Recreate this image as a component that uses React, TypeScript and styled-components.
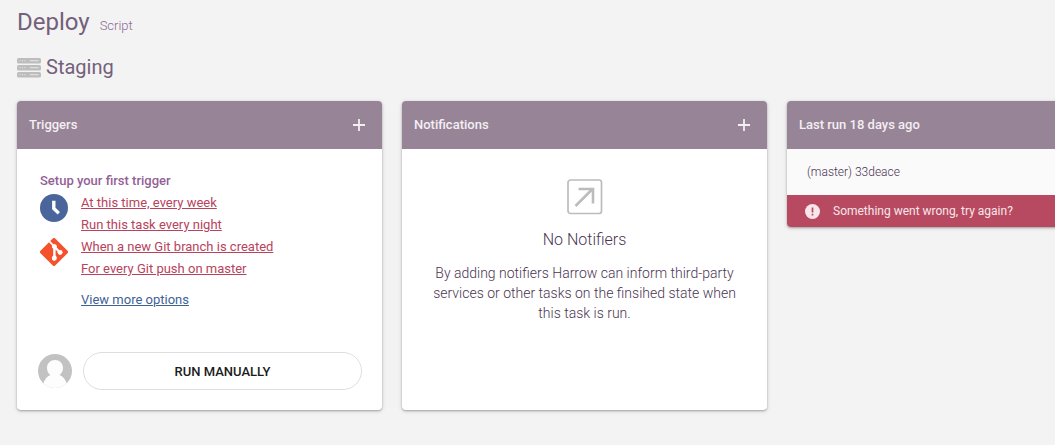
import React from "react";
import styled, { createGlobalStyle } from "styled-components";

const GlobalStyle = createGlobalStyle`
  *, *::before, *::after { box-sizing: border-box; }
  body {
    margin: 0;
    background: #f3f3f3;
    color: #4b3552;
    font-family: Roboto, "Liberation Sans", sans-serif;
    font-size: 13px;
    line-height: 22px;
  }
  h1, h2, h3, p, ul { margin: 0; padding: 0; }
  svg { display: block; flex: none; }
`;

const Page = styled.main`
  padding: 6px 0 32px 17px;
  overflow-x: hidden;
`;

const PageHeader = styled.header`
  display: flex;
  align-items: baseline;
  gap: 10px;
`;

const Title = styled.h1`
  font-size: 24px;
  font-weight: 400;
  line-height: 32px;
  color: #73607a;
`;

const Kind = styled.span`
  font-weight: 300;
  color: #8a6a93;
`;

const Environment = styled.h2`
  display: flex;
  align-items: center;
  gap: 5px;
  margin-top: 13px;
  font-size: 20px;
  font-weight: 400;
  line-height: 32px;
  color: #73607a;
`;

const Board = styled.div`
  display: grid;
  grid-auto-flow: column;
  grid-auto-columns: minmax(365px, 1fr);
  align-items: start;
  gap: 20px;
  margin-top: 18px;
`;

const Card = styled.section<{ $tall?: boolean }>`
  display: flex;
  flex-direction: column;
  min-height: ${(p) => (p.$tall ? "309px" : "0")};
  border-radius: 4px;
  overflow: hidden;
  background: #fff;
  box-shadow: 0 1px 5px rgba(0, 0, 0, 0.14), 0 1px 2px rgba(0, 0, 0, 0.26);
`;

const CardHeader = styled.header`
  display: flex;
  align-items: center;
  justify-content: space-between;
  height: 48px;
  padding: 0 12px;
  background: #988497;
  color: #f3eff3;
`;

const CardTitle = styled.h3`
  font-size: 13px;
  font-weight: 500;
`;

const AddButton = styled.button`
  display: flex;
  align-items: center;
  justify-content: center;
  width: 22px;
  height: 22px;
  padding: 0;
  border: 0;
  background: none;
  color: inherit;
  cursor: pointer;
`;

const Setup = styled.div`
  padding: 21px 23px 0;
`;

const SetupTitle = styled.h3`
  font-size: 13px;
  font-weight: 500;
  color: #935f97;
`;

const TriggerGroup = styled.div`
  display: flex;
  align-items: flex-start;
  gap: 13px;
`;

const TriggerIcon = styled.span`
  padding-top: 2px;
`;

const TriggerList = styled.ul`
  list-style: none;
`;

const TextLink = styled.a<{ $tone: string }>`
  color: ${(p) => p.$tone};
  text-decoration: underline;
`;

const MoreOptions = styled.p`
  margin: 9px 0 0 41px;
`;

const RunBar = styled.div`
  display: flex;
  align-items: center;
  gap: 11px;
  margin-top: auto;
  padding: 20px 20px 20px 21px;
`;

const RunButton = styled.button`
  flex: 1;
  height: 38px;
  border: 1px solid #dedede;
  border-radius: 19px;
  background: #fff;
  color: #1c1c1c;
  font: 500 13px Roboto, "Liberation Sans", sans-serif;
  text-transform: uppercase;
  cursor: pointer;
`;

const EmptyState = styled.div`
  display: flex;
  flex-direction: column;
  align-items: center;
  padding: 30px 24px;
  text-align: center;
`;

const EmptyTitle = styled.h3`
  margin-top: 14px;
  font-size: 16px;
  font-weight: 300;
  line-height: 22px;
`;

const EmptyText = styled.p`
  margin-top: 12px;
  font-size: 14px;
  font-weight: 300;
  line-height: 20px;
`;

const Revision = styled.p`
  padding: 12px 20px;
  background: #fafafa;
  font-size: 12px;
  font-weight: 300;
`;

const RunError = styled.button`
  display: flex;
  align-items: center;
  gap: 13px;
  height: 32px;
  padding: 0 18px;
  border: 0;
  background: #b74a60;
  color: #f8e6ea;
  font: 400 12px Roboto, "Liberation Sans", sans-serif;
  text-align: left;
  cursor: pointer;
`;

const RED = "#b8435c";
const BLUE = "#3e6294";

const ServerIcon = () => (
  <svg width="24" height="22" viewBox="0 0 24 22" aria-hidden="true">
    {[2, 9, 16].map((y) => (
      <g key={y}>
        <rect y={y} width="24" height="5.500" rx="1.500" fill="#bdbdbd" />
        <path
          d={`M2.500 ${y + 2.7}h1M5 ${y + 2.7}h1M7.500 ${y + 2.7}h1M13 ${y + 2.7}h8.500`}
          stroke="#dedede"
          strokeWidth="1.200"
        />
      </g>
    ))}
  </svg>
);

const PlusIcon = () => (
  <svg width="12" height="12" viewBox="0 0 12 12" aria-hidden="true">
    <path d="M6 0v12M0 6h12" stroke="currentColor" strokeWidth="1.800" />
  </svg>
);

const ClockIcon = () => (
  <svg width="28" height="28" viewBox="0 0 28 28" aria-hidden="true">
    <circle cx="14" cy="14" r="14" fill="#4a649c" />
    <path d="M13.800 6.800v7.800l5 4.600" fill="none" stroke="#fff" strokeWidth="3.400" />
  </svg>
);

const GitIcon = () => (
  <svg width="28" height="28" viewBox="0 0 28 28" aria-hidden="true">
    <path
      d="M12.800.500 10.200 3.100l3.300 3.300a2.200 2.200 0 0 1 2.800 2.800l3.200 3.200a2.200 2.200 0 1 1-1.300 1.300l-3-3v7.800a2.200 2.200 0 1 1-1.800-.100v-7.900a2.200 2.200 0 0 1-1.200-2.900L9 4.300.500 12.800a1.700 1.700 0 0 0 0 2.400l12.300 12.300a1.700 1.700 0 0 0 2.400 0l12.300-12.300a1.700 1.700 0 0 0 0-2.400L15.200.500a1.700 1.700 0 0 0-2.400 0Z"
      fill="#f4512c"
    />
    <path d="M14.500 10v9M15 9.500l4.500 4.500" stroke="#fff" strokeWidth="2" />
    <circle cx="14.400" cy="8.600" r="2.400" fill="#fff" />
    <circle cx="20" cy="14.300" r="2.400" fill="#fff" />
    <circle cx="14.400" cy="20" r="2.400" fill="#fff" />
  </svg>
);

const Avatar = () => (
  <svg width="34" height="34" viewBox="0 0 34 34" role="img" aria-label="User">
    <defs>
      <clipPath id="avatar-clip">
        <circle cx="17" cy="17" r="17" />
      </clipPath>
    </defs>
    <g clipPath="url(#avatar-clip)">
      <rect width="34" height="34" fill="#c2c2c2" />
      <path
        d="M17 6c4.600 0 8 3.300 8 8 0 3-1.300 5.500-3.500 7 3.500 1.300 6 4.500 7.500 9v4H5v-4c1.500-4.500 4-7.700 7.500-9C10.300 19.500 9 17 9 14c0-4.700 3.400-8 8-8Z"
        fill="#fdfdfd"
      />
    </g>
  </svg>
);

const NotifierIcon = () => (
  <svg width="36" height="36" viewBox="0 0 36 36" fill="none" stroke="#bcbcbc" aria-hidden="true">
    <rect x="1" y="1" width="33.500" height="33.500" rx="2.500" strokeWidth="1.700" />
    <path d="M8.500 27 25.500 10M11.500 10H26v14.500" strokeWidth="2.600" />
  </svg>
);

const AlertIcon = () => (
  <svg width="15" height="15" viewBox="0 0 15 15" aria-hidden="true">
    <circle cx="7.500" cy="7.500" r="7.500" fill="#f8e6ea" />
    <path d="M7.500 3.500v5M7.500 9.800v1.700" stroke="#b74a60" strokeWidth="1.700" />
  </svg>
);

const triggerGroups = [
  { icon: <ClockIcon />, links: ["At this time, every week", "Run this task every night"] },
  { icon: <GitIcon />, links: ["When a new Git branch is created", "For every Git push on master"] },
];

export default function App() {
  return (
    <>
      <GlobalStyle />
      <Page>
        <PageHeader>
          <Title>Deploy</Title>
          <Kind>Script</Kind>
        </PageHeader>
        <Environment>
          <ServerIcon />
          Staging
        </Environment>
        <Board>
          <Card $tall>
            <CardHeader>
              <CardTitle>Triggers</CardTitle>
              <AddButton aria-label="Add trigger">
                <PlusIcon />
              </AddButton>
            </CardHeader>
            <Setup>
              <SetupTitle>Setup your first trigger</SetupTitle>
              {triggerGroups.map((group) => (
                <TriggerGroup key={group.links[0]}>
                  <TriggerIcon>{group.icon}</TriggerIcon>
                  <TriggerList>
                    {group.links.map((label) => (
                      <li key={label}>
                        <TextLink href="#" $tone={RED}>{label}</TextLink>
                      </li>
                    ))}
                  </TriggerList>
                </TriggerGroup>
              ))}
              <MoreOptions>
                <TextLink href="#" $tone={BLUE}>View more options</TextLink>
              </MoreOptions>
            </Setup>
            <RunBar>
              <Avatar />
              <RunButton>Run manually</RunButton>
            </RunBar>
          </Card>
          <Card $tall>
            <CardHeader>
              <CardTitle>Notifications</CardTitle>
              <AddButton aria-label="Add notification">
                <PlusIcon />
              </AddButton>
            </CardHeader>
            <EmptyState>
              <NotifierIcon />
              <EmptyTitle>No Notifiers</EmptyTitle>
              <EmptyText>
                By adding notifiers Harrow can inform third-party services or other tasks on the
                finsihed state when this task is run.
              </EmptyText>
            </EmptyState>
          </Card>
          <Card>
            <CardHeader>
              <CardTitle>Last run 18 days ago</CardTitle>
            </CardHeader>
            <Revision>(master) 33deace</Revision>
            <RunError>
              <AlertIcon />
              Something went wrong, try again?
            </RunError>
          </Card>
        </Board>
      </Page>
    </>
  );
}
